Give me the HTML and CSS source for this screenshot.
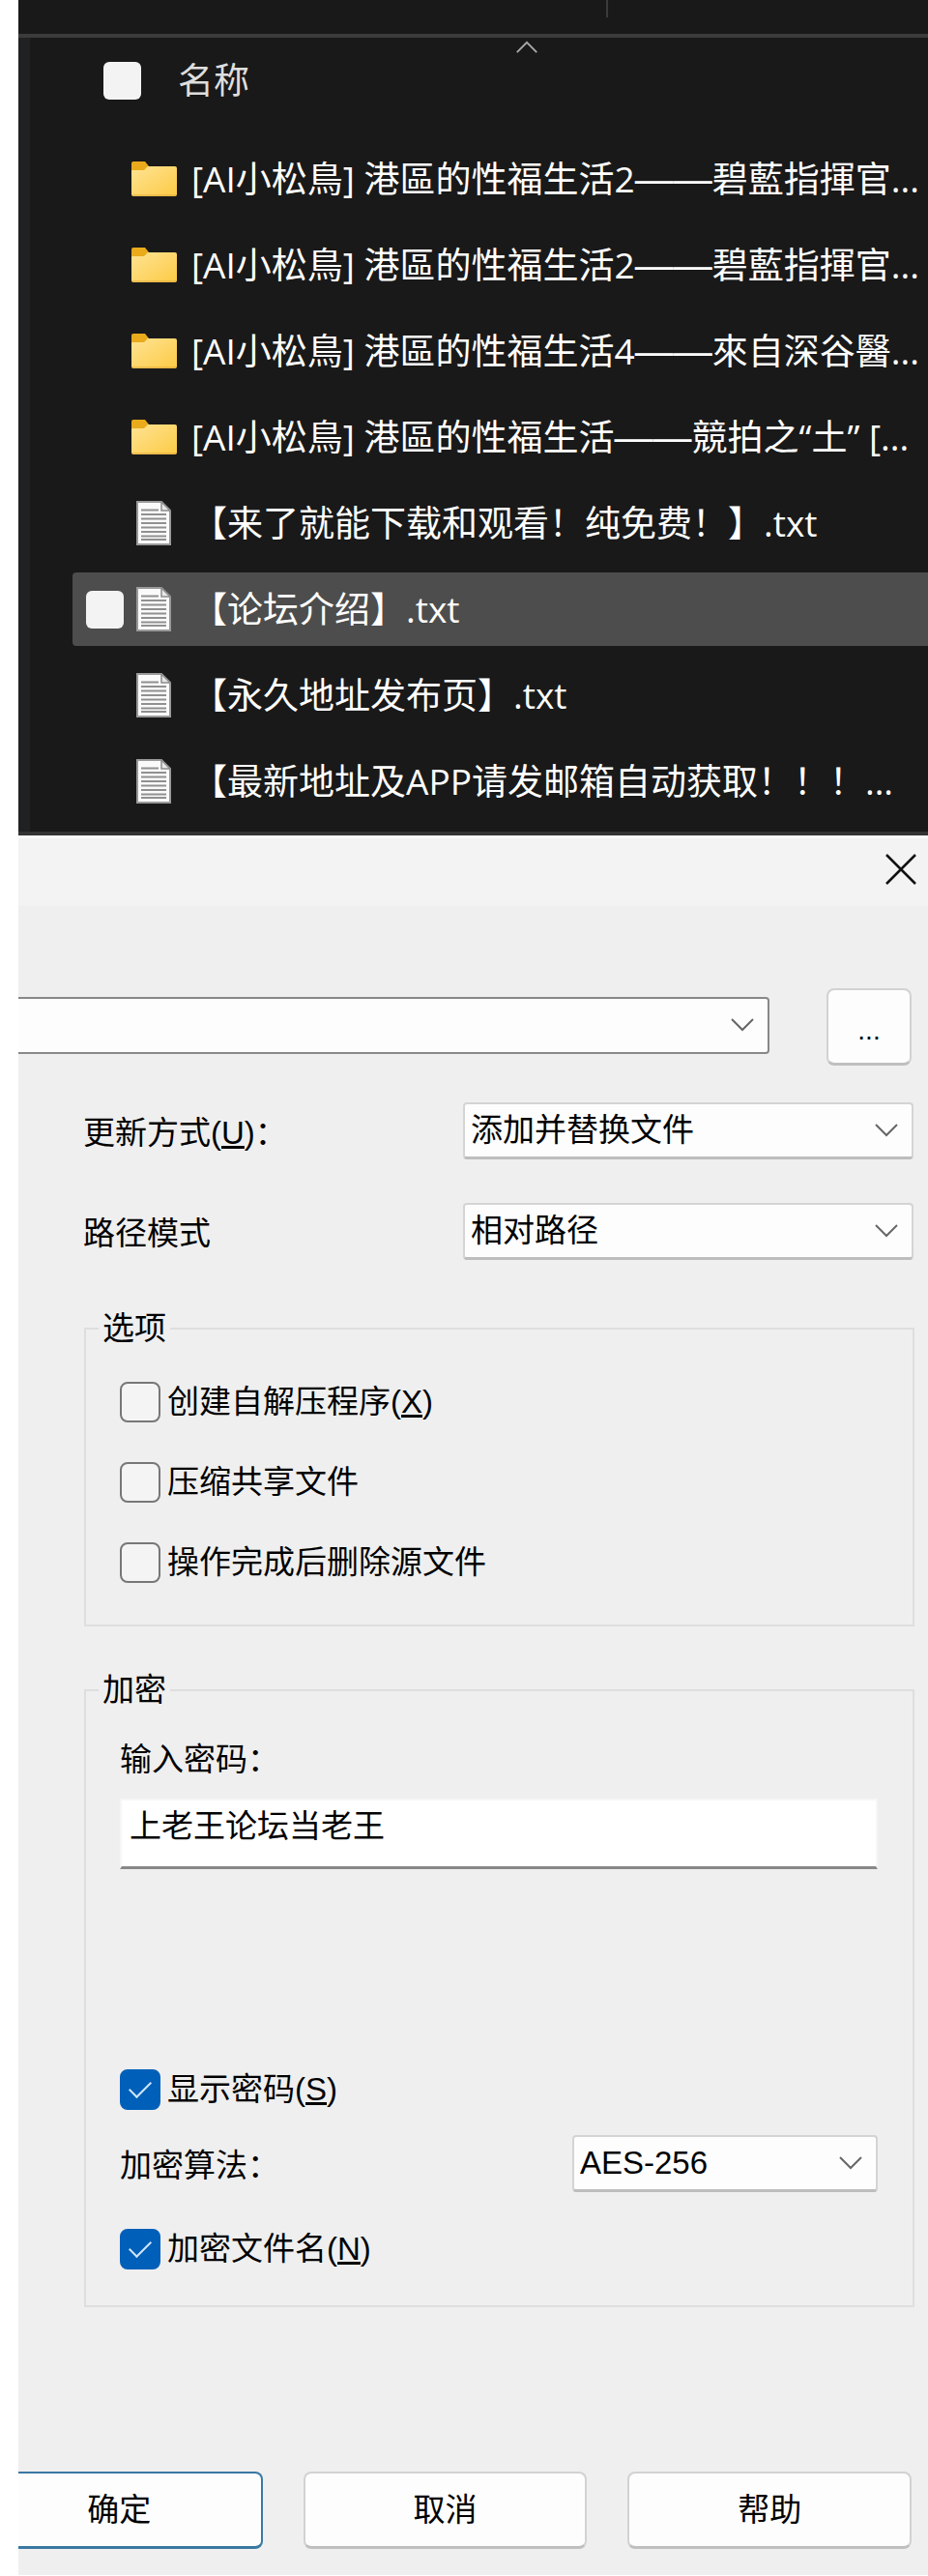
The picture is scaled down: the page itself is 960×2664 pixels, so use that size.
FILE: index.html
```html
<!DOCTYPE html>
<html lang="zh-CN">
<head>
	<meta charset="UTF-8">
	<meta name="viewport" content="width=device-width, initial-scale=1.0">
	<title>添加到压缩包</title>
	<link rel="stylesheet" href="styles.css">
</head>
<body>
	<!-- shared icons -->
	<svg class="defs" width="0" height="0" aria-hidden="true">
		<defs>
			<linearGradient id="folderFill" x1="0" y1="0" x2="1" y2="1">
				<stop offset="0" stop-color="#ffe394"/>
				<stop offset="1" stop-color="#fccb45"/>
			</linearGradient>
			<symbol id="folder" viewBox="0 0 47 36">
				<path d="M0 2q0-2 2-2h12l4 5v10H0z" fill="#e9ab1c"/>
				<path d="M0 10q0-1 1-1h12l4-4h28q2 0 2 2v27q0 2-2 2H2q-2 0-2-2z" fill="url(#folderFill)"/>
				<path d="M1 35h45" stroke="#dca63a" stroke-width="1"/>
			</symbol>
			<symbol id="doc" viewBox="0 0 36 46">
				<path d="M1 1h25l9 9v35H1z" fill="#fafafa" stroke="#9a9a9a" stroke-width="2"/>
				<path d="M26 1v9h9z" fill="#e8e8e8" stroke="#8c8c8c" stroke-width="1.5"/>
				<path d="M5 9.500h18M5 14h26M5 18.500h26M5 23h26M5 27.500h26M5 32h26M5 36.500h26M5 40h26" stroke="#909090" stroke-width="1.800"/>
			</symbol>
			<symbol id="chevron" viewBox="0 0 24 14">
				<path d="M1 1l11 11L23 1" fill="none" stroke="currentColor" stroke-width="2"/>
			</symbol>
		</defs>
	</svg>

	<main class="screen">
		<section class="explorer">
			<div class="toolbar"><span class="separator"></span></div>
			<div class="list">
				<svg class="sort"><use href="#chevron"/></svg>
				<div class="list-head">
					<input type="checkbox" class="pick" aria-label="全选">
					<span>名称</span>
				</div>
				<ul class="files">
					<li class="file"><svg class="folder"><use href="#folder"/></svg><span class="name">[AI小松鳥] 港區的性福生活2<span class="dash">——</span>碧藍指揮官...</span></li>
					<li class="file"><svg class="folder"><use href="#folder"/></svg><span class="name">[AI小松鳥] 港區的性福生活2<span class="dash">——</span>碧藍指揮官...</span></li>
					<li class="file"><svg class="folder"><use href="#folder"/></svg><span class="name">[AI小松鳥] 港區的性福生活4<span class="dash">——</span>來自深谷醫...</span></li>
					<li class="file"><svg class="folder"><use href="#folder"/></svg><span class="name">[AI小松鳥] 港區的性福生活<span class="dash">——</span>競拍之“土” [...</span></li>
					<li class="file"><svg class="doc"><use href="#doc"/></svg><span class="name">【来了就能下载和观看！纯免费！】.txt</span></li>
					<li class="file selected"><input type="checkbox" class="pick" aria-label="选择"><svg class="doc"><use href="#doc"/></svg><span class="name">【论坛介绍】.txt</span></li>
					<li class="file"><svg class="doc"><use href="#doc"/></svg><span class="name">【永久地址发布页】.txt</span></li>
					<li class="file"><svg class="doc"><use href="#doc"/></svg><span class="name">【最新地址及APP请发邮箱自动获取！！！...</span></li>
				</ul>
			</div>
		</section>

		<form class="dialog">
			<div class="titlebar">
				<button type="button" class="close" aria-label="关闭">
					<svg viewBox="0 0 32 32"><path d="M1 1l30 30M31 1L1 31" stroke="#111" stroke-width="2.5"/></svg>
				</button>
			</div>

			<div class="archive">
				<div class="combo archive-combo">
					<select aria-label="压缩包"><option></option></select>
					<svg><use href="#chevron"/></svg>
				</div>
				<button type="button" class="btn browse">...</button>
			</div>

			<div class="row">
				<label for="update">更新方式(<u>U</u>)：</label>
				<div class="combo">
					<select id="update"><option>添加并替换文件</option></select>
					<svg><use href="#chevron"/></svg>
				</div>
			</div>
			<div class="row">
				<label for="paths">路径模式</label>
				<div class="combo">
					<select id="paths"><option>相对路径</option></select>
					<svg><use href="#chevron"/></svg>
				</div>
			</div>

			<fieldset class="group options">
				<legend>选项</legend>
				<label class="check"><input type="checkbox"><span>创建自解压程序(<u>X</u>)</span></label>
				<label class="check"><input type="checkbox"><span>压缩共享文件</span></label>
				<label class="check"><input type="checkbox"><span>操作完成后删除源文件</span></label>
			</fieldset>

			<fieldset class="group encrypt">
				<legend>加密</legend>
				<label for="password">输入密码：</label>
				<input type="text" id="password" class="password" value="上老王论坛当老王">
				<label class="check"><input type="checkbox" checked><span>显示密码(<u>S</u>)</span></label>
				<div class="method">
					<label for="method">加密算法：</label>
					<div class="combo">
						<select id="method"><option>AES-256</option></select>
						<svg><use href="#chevron"/></svg>
					</div>
				</div>
				<label class="check"><input type="checkbox" checked><span>加密文件名(<u>N</u>)</span></label>
			</fieldset>

			<div class="actions">
				<button type="button" class="btn primary">确定</button>
				<button type="button" class="btn">取消</button>
				<button type="button" class="btn">帮助</button>
			</div>
		</form>
	</main>
</body>
</html>
```
FILE: styles.css
```css
* {
	box-sizing: border-box;
}
body {
	margin: 0;
	background: #fff;
	font-family: "Liberation Sans", "Noto Sans CJK SC", sans-serif;
	font-size: 33px;
	line-height: 40px;
	color: #000;
}
button, select, input {
	font: inherit;
	color: inherit;
	margin: 0;
}
.defs {
	position: absolute;
}
.screen {
	margin-left: 19px;
	padding-bottom: 2px;
}

/* file list */
.explorer {
	background: #191919;
	color: #fff;
	border-bottom: 4px solid #333;
	font-family: "Open Sans", "Noto Sans CJK SC", sans-serif;
	font-size: 37px;
}
.toolbar {
	display: flex;
	justify-content: center;
	height: 39px;
	padding-left: 277px;
	border-bottom: 4px solid #3b3b3b;
}
.separator {
	width: 2px;
	height: 18px;
	background: #3b3b3b;
}
.list {
	position: relative;
	border-left: 12px solid #202122;
	padding-bottom: 14px;
}
.sort {
	position: absolute;
	top: 3px;
	left: 502px;
	width: 24px;
	height: 13px;
	color: #aaa;
	transform: rotate(180deg);
}
.list-head {
	display: flex;
	align-items: center;
	gap: 38px;
	height: 108px;
	padding: 0 0 20px 76px;
	color: #dedede;
}
.pick {
	appearance: none;
	width: 39px;
	height: 39px;
	border-radius: 6px;
	background: #f3f3f3;
	flex: none;
}
.files {
	list-style: none;
	margin: 0;
	padding: 0 0 0 44px;
	display: flex;
	flex-direction: column;
	gap: 13px;
}
.file {
	display: flex;
	align-items: center;
	height: 76px;
	padding-left: 61px;
	white-space: nowrap;
	overflow: hidden;
}
.file.selected {
	background: #4d4d4d;
	border-radius: 4px 0 0 4px;
	padding-left: 14px;
}
.file .pick {
	margin-right: 8px;
}
.folder {
	width: 47px;
	height: 36px;
	margin-right: 15px;
}
.doc {
	width: 36px;
	height: 46px;
	margin: 0 21px 0 5px;
}
.dash {
	font-family: "Liberation Sans", sans-serif;
	font-size: 40px;
}

/* archive dialog */
.dialog {
	background: #efefef;
	border-top: 3px solid #fafafa;
	padding-bottom: 27px;
}
.titlebar {
	display: flex;
	justify-content: flex-end;
	align-items: flex-start;
	height: 70px;
	padding: 16px 12px;
	background: #f3f3f3;
}
.close {
	display: block;
	width: 32px;
	height: 32px;
	padding: 0;
	border: 0;
	background: none;
}
.close svg {
	display: block;
}
.archive {
	display: flex;
	align-items: center;
	gap: 59px;
	margin: 85px 17px 38px 0;
}
.combo {
	position: relative;
}
.combo select {
	appearance: none;
	display: block;
	width: 100%;
	height: 59px;
	padding: 0 50px 0 6px;
	border: 2px solid #d4d4d4;
	border-bottom: 3px solid #bdbdbd;
	border-radius: 4px;
	background: #fdfdfd;
}
.combo svg {
	position: absolute;
	top: 22px;
	right: 16px;
	width: 24px;
	height: 14px;
	color: #666;
	pointer-events: none;
}
.archive-combo {
	flex: 1;
	padding-bottom: 4px;
}
.archive-combo select {
	border: 2px solid #888;
	border-left: 0;
	border-radius: 0 4px 4px 0;
}
.btn {
	height: 80px;
	padding: 0;
	border: 2px solid #d2d2d2;
	border-bottom: 3px solid #bfbfbf;
	border-radius: 8px;
	background: #fdfdfd;
}
.browse {
	width: 88px;
	padding-top: 8px;
	font-size: 28px;
}
.row {
	display: flex;
	align-items: center;
	margin: 0 15px 45px 67px;
}
.row label {
	flex: 1;
	padding-top: 4px;
}
.row .combo {
	width: 466px;
}
.group {
	margin: 0 14px 0 68px;
	padding: 0 36px 0 35px;
	border: 2px solid #dedede;
	min-width: 0;
}
.group legend {
	margin-left: -22px;
	padding: 0 4px;
}
.options {
	margin-top: 51px;
	padding-top: 35px;
	padding-bottom: 43px;
	display: flex;
	flex-direction: column;
	gap: 41px;
}
.check {
	display: flex;
	align-items: center;
	gap: 7px;
	height: 42px;
}
.check input {
	appearance: none;
	flex: none;
	width: 42px;
	height: 42px;
	border: 2px solid #777;
	border-radius: 8px;
	background: #f4f4f4;
}
.check input:checked {
	border-color: #005fb8;
	background: #005fb8;
	display: grid;
	place-items: center;
}
.check input:checked::before {
	content: "";
	width: 20px;
	height: 10px;
	border-left: 2px solid #cfe6fa;
	border-bottom: 2px solid #cfe6fa;
	transform: translateY(-3px) rotate(-45deg);
}
.encrypt {
	margin-top: 46px;
	padding-top: 32px;
	padding-bottom: 37px;
}
.password {
	display: block;
	width: 100%;
	height: 73px;
	margin: 20px 0 207px;
	padding: 0 8px 20px;
	border: 2px solid #f6f6f6;
	border-bottom: 3px solid #888;
	background: #fff;
}
.method {
	display: flex;
	align-items: center;
	justify-content: space-between;
	margin: 26px 0 38px;
}
.method label {
	padding-top: 4px;
}
.method .combo {
	width: 316px;
}
.actions {
	display: grid;
	grid-template-columns: 253fr 294fr 294fr;
	gap: 42px;
	margin: 170px 17px 0 0;
}
.primary {
	padding-right: 42px;
	border: 2px solid #3a78a3;
	border-bottom-width: 3px;
	border-left: 0;
	border-radius: 0 8px 8px 0;
}
```
